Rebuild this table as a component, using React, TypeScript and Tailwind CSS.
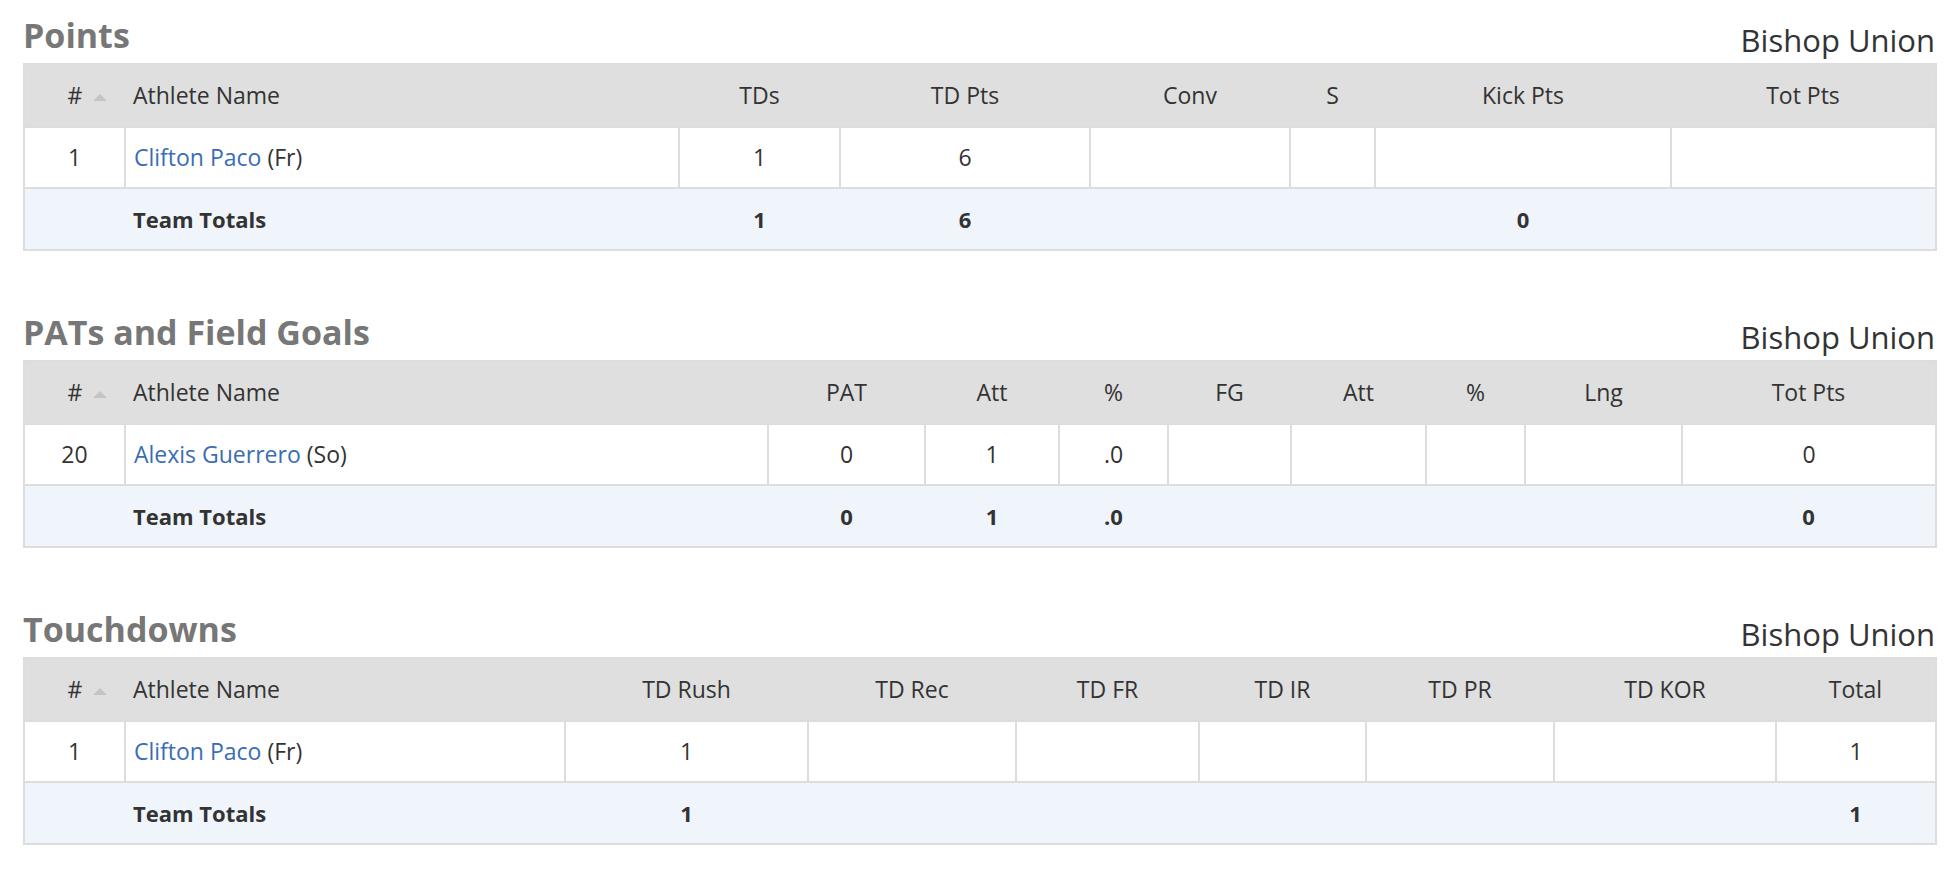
type Col = { label: string; w: string };

type Section = {
  title: string;
  cols: Col[];
  num: string;
  name: string;
  cls: string;
  stats: string[];
  totals: string[];
};

const sections: Section[] = [
  {
    title: "Points",
    cols: [
      { label: "TDs", w: "w-[161px]" },
      { label: "TD Pts", w: "w-[250px]" },
      { label: "Conv", w: "w-[200px]" },
      { label: "S", w: "w-[85px]" },
      { label: "Kick Pts", w: "w-[296px]" },
      { label: "Tot Pts", w: "w-[265px]" },
    ],
    num: "1",
    name: "Clifton Paco",
    cls: "(Fr)",
    stats: ["1", "6", "", "", "", ""],
    totals: ["1", "6", "", "", "0", ""],
  },
  {
    title: "PATs and Field Goals",
    cols: [
      { label: "PAT", w: "w-[157px]" },
      { label: "Att", w: "w-[134px]" },
      { label: "%", w: "w-[109px]" },
      { label: "FG", w: "w-[123px]" },
      { label: "Att", w: "w-[135px]" },
      { label: "%", w: "w-[99px]" },
      { label: "Lng", w: "w-[157px]" },
      { label: "Tot Pts", w: "w-[254px]" },
    ],
    num: "20",
    name: "Alexis Guerrero",
    cls: "(So)",
    stats: ["0", "1", ".0", "", "", "", "", "0"],
    totals: ["0", "1", ".0", "", "", "", "", "0"],
  },
  {
    title: "Touchdowns",
    cols: [
      { label: "TD Rush", w: "w-[243px]" },
      { label: "TD Rec", w: "w-[208px]" },
      { label: "TD FR", w: "w-[183px]" },
      { label: "TD IR", w: "w-[167px]" },
      { label: "TD PR", w: "w-[188px]" },
      { label: "TD KOR", w: "w-[222px]" },
      { label: "Total", w: "w-[160px]" },
    ],
    num: "1",
    name: "Clifton Paco",
    cls: "(Fr)",
    stats: ["1", "", "", "", "", "", "1"],
    totals: ["1", "", "", "", "", "", "1"],
  },
];

const nameWidths = ["w-[554px]", "w-[643px]", "w-[440px]"];

function StatTable({ s, idx }: { s: Section; idx: number }) {
  return (
    <div className={idx > 0 ? "mt-[46px]" : ""}>
      <div className="h-[63px] flex items-end justify-between">
        <h2 className="pb-[11px] text-[34px] leading-none font-bold text-[#777]">{s.title}</h2>
        <div className="pb-[7px] text-[31px] leading-none text-[#333]">Bishop Union</div>
      </div>
      <table className="w-full table-fixed border-collapse border-2 border-[#ddd] text-[23px] text-[#333]">
        <colgroup>
          <col className="w-[101px]" />
          <col className={nameWidths[idx]} />
          {s.cols.map((c, i) => (
            <col key={i} className={c.w} />
          ))}
        </colgroup>
        <thead>
          <tr className="h-[63px] bg-[#dfdfdf]">
            <th className="relative font-normal text-center">
              #
              <span className="absolute right-[18px] top-[29px] w-0 h-0 border-l-[7px] border-r-[7px] border-b-[7px] border-l-transparent border-r-transparent border-b-[#c4c4c4]" />
            </th>
            <th className="font-normal text-left pl-2">Athlete Name</th>
            {s.cols.map((c, i) => (
              <th key={i} className="font-normal text-center">
                {c.label}
              </th>
            ))}
          </tr>
        </thead>
        <tbody>
          <tr className="h-[61px] bg-white">
            <td className="text-center border-2 border-[#ddd]">{s.num}</td>
            <td className="text-left pl-2 border-2 border-[#ddd]">
              <a href="#" className="text-[#3a6db5]">{s.name}</a> {s.cls}
            </td>
            {s.stats.map((v, i) => (
              <td key={i} className="text-center border-2 border-[#ddd]">
                {v}
              </td>
            ))}
          </tr>
          <tr className="h-[62px] bg-[#f0f5fc] font-bold text-[22px]">
            <td />
            <td className="text-left pl-2">Team Totals</td>
            {s.totals.map((v, i) => (
              <td key={i} className="text-center">
                {v}
              </td>
            ))}
          </tr>
        </tbody>
      </table>
    </div>
  );
}

export default function App() {
  return (
    <div className="min-h-screen bg-white px-[23px] font-['Open_Sans',sans-serif]">
      {sections.map((s, i) => (
        <StatTable key={s.title} s={s} idx={i} />
      ))}
    </div>
  );
}
